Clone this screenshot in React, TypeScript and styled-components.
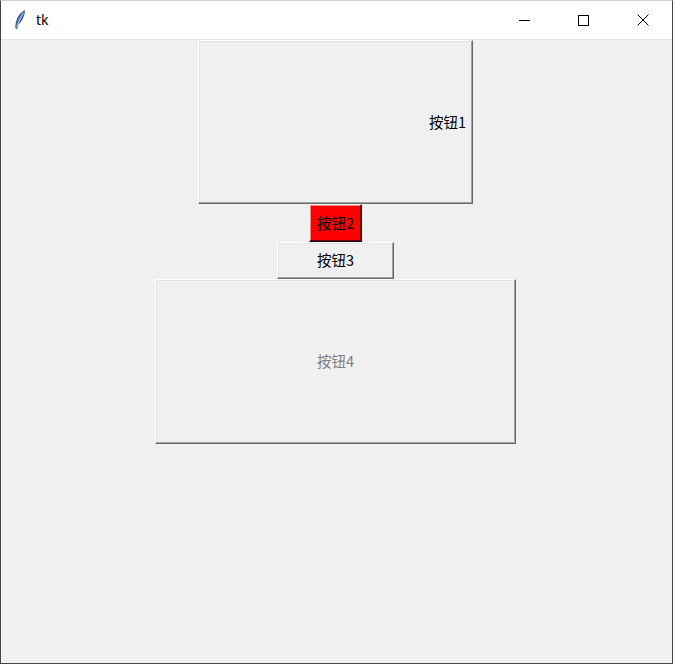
import React from "react";
import styled, { createGlobalStyle } from "styled-components";

const GlobalStyle = createGlobalStyle`
  html, body {
    margin: 0;
    padding: 0;
    background: #ffffff;
  }
  * {
    box-sizing: border-box;
  }
`;

const Frame = styled.div`
  width: 673px;
  height: 664px;
  display: flex;
  flex-direction: column;
  border: 1px solid #454545;
  border-top-color: #cfcfcf;
  background: #f0f0f0;
  overflow: hidden;
`;

const TitleBar = styled.div`
  height: 39px;
  flex: none;
  display: flex;
  align-items: center;
  background: #ffffff;
  border-bottom: 1px solid #e6e6e6;
  font-family: "Segoe UI", "Noto Sans", "Liberation Sans", sans-serif;
`;

const AppIcon = styled.div`
  width: 16px;
  height: 20px;
  margin-left: 11px;
  margin-right: 8px;
  display: flex;
  align-items: center;
  justify-content: center;
`;

const Title = styled.span`
  font-size: 14px;
  color: #000000;
  flex: 1;
  margin-top: -1px;
`;

const Controls = styled.div`
  display: flex;
  height: 100%;
`;

const ControlButton = styled.div`
  width: 59px;
  height: 100%;
  display: flex;
  align-items: center;
  justify-content: center;
`;

const Content = styled.div`
  flex: 1;
  display: flex;
  flex-direction: column;
  align-items: center;
  padding-right: 2px;
  background: #f0f0f0;
`;

type ButtonProps = {
  $w: number;
  $h: number;
  $bg?: string;
  $color?: string;
  $align?: "center" | "flex-end";
  $dark?: string;
};

const TkButton = styled.div<ButtonProps>`
  width: ${(p) => p.$w}px;
  height: ${(p) => p.$h}px;
  flex: none;
  display: flex;
  align-items: center;
  justify-content: ${(p) => p.$align || "center"};
  padding: 0 6px;
  background: ${(p) => p.$bg || "#f0f0f0"};
  color: ${(p) => p.$color || "#000000"};
  border: 1px solid;
  border-color: #ffffff ${(p) => p.$dark || "#696969"} ${(p) => p.$dark || "#696969"} #ffffff;
  box-shadow: inset -1px -1px 0 ${(p) => (p.$dark ? "#7a0000" : "#a0a0a0")},
    inset 1px 1px 0 ${(p) => (p.$dark ? "#ff8080" : "#e3e3e3")};
  font-family: "Noto Sans CJK SC", "Noto Sans", sans-serif;
  font-size: 14.5px;
  line-height: 1;
  white-space: nowrap;
`;

const Feather = () => (
  <svg width="12" height="20" viewBox="0 0 12 20">
    <path
      d="M10.5 0.8 C 6 3, 3 8, 2 14 L 1.8 18 L 3 18.5 L 3.6 15 C 7 12, 10 7, 10.5 0.8 Z"
      fill="#4a78c2"
      stroke="#1d3560"
      strokeWidth="0.8"
    />
    <path d="M9.5 2.5 C 7 7, 5 11, 2.6 17.5" stroke="#c8dcff" strokeWidth="0.8" fill="none" />
  </svg>
);

export default function App() {
  return (
    <>
      <GlobalStyle />
      <Frame>
        <TitleBar>
          <AppIcon>
            <Feather />
          </AppIcon>
          <Title>tk</Title>
          <Controls>
            <ControlButton>
              <svg width="11" height="11" viewBox="0 0 11 11">
                <line x1="0" y1="5.5" x2="11" y2="5.5" stroke="#000" strokeWidth="1" />
              </svg>
            </ControlButton>
            <ControlButton>
              <svg width="11" height="11" viewBox="0 0 11 11">
                <rect x="0.5" y="0.5" width="10" height="10" fill="none" stroke="#000" strokeWidth="1" />
              </svg>
            </ControlButton>
            <ControlButton>
              <svg width="12" height="12" viewBox="0 0 12 12">
                <path d="M0.5 0.5 L11.5 11.5 M11.5 0.5 L0.5 11.5" stroke="#000" strokeWidth="1" />
              </svg>
            </ControlButton>
          </Controls>
        </TitleBar>
        <Content>
          <TkButton $w={275} $h={164} $align="flex-end">
            按钮1
          </TkButton>
          <TkButton $w={53} $h={38} $bg="#ff0000" $dark="#000000">
            按钮2
          </TkButton>
          <TkButton $w={117} $h={37}>
            按钮3
          </TkButton>
          <TkButton $w={361} $h={165} $color="#7f7f7f">
            按钮4
          </TkButton>
        </Content>
      </Frame>
    </>
  );
}
